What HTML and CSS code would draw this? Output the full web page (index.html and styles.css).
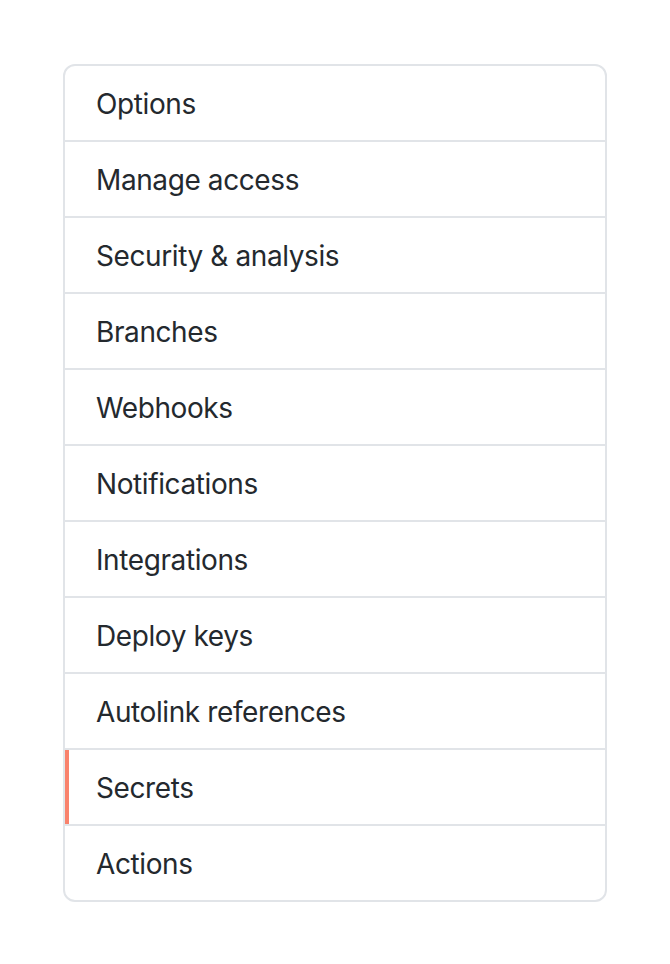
FILE: index.html
```html
<!DOCTYPE html>
<html lang="en">
<head>
    <meta charset="UTF-8">
    <meta name="viewport" content="width=device-width, initial-scale=1.0">
    <title>Settings</title>
    <link rel="stylesheet" href="styles.css">
</head>
<body>
    <nav class="menu">
        <a class="menu-item" href="#">Options</a>
        <a class="menu-item" href="#">Manage access</a>
        <a class="menu-item" href="#">Security &amp; analysis</a>
        <a class="menu-item" href="#">Branches</a>
        <a class="menu-item" href="#">Webhooks</a>
        <a class="menu-item" href="#">Notifications</a>
        <a class="menu-item" href="#">Integrations</a>
        <a class="menu-item" href="#">Deploy keys</a>
        <a class="menu-item" href="#">Autolink references</a>
        <a class="menu-item selected" href="#">Secrets</a>
        <a class="menu-item" href="#">Actions</a>
    </nav>
</body>
</html>
```

FILE: styles.css
```css
body, html {
    margin: 0;
    padding: 0;
    background-color: #ffffff;
    font-family: Inter, "Noto Sans", sans-serif;
}

body {
    padding-top: 64px;
}

.menu {
    width: 544px;
    box-sizing: border-box;
    margin: 0 auto;
    border: 2px solid #e1e4e8;
    border-radius: 12px;
    overflow: hidden;
    display: flex;
    flex-direction: column;
}

.menu-item {
    position: relative;
    display: block;
    padding: 17px 32px 15px 31px;
    font-size: 28px;
    line-height: 42px;
    letter-spacing: -0.4px;
    color: #24292e;
    text-decoration: none;
    border-bottom: 2px solid #e1e4e8;
}

.menu-item:last-child {
    border-bottom: none;
}

.menu-item.selected::before {
    content: "";
    position: absolute;
    top: 0;
    bottom: 0;
    left: 0;
    width: 4px;
    background-color: #f9826c;
}
```
